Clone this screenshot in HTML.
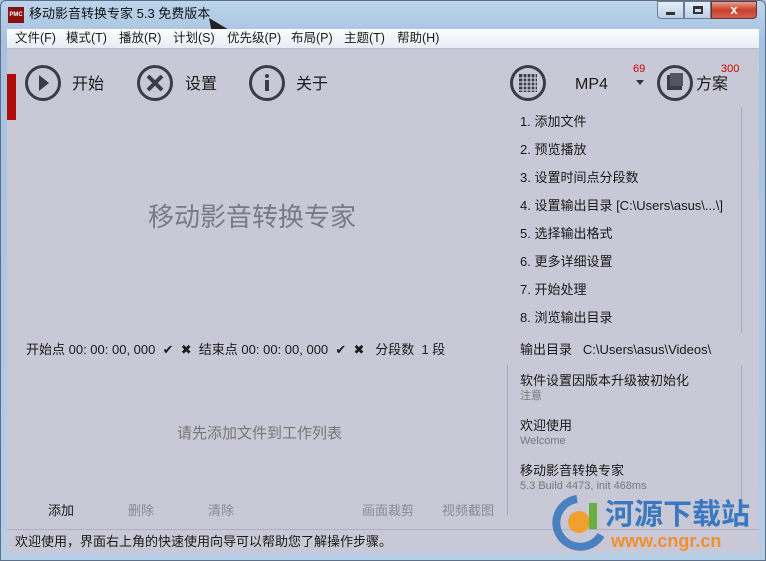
<!DOCTYPE html><html><head><meta charset="utf-8"><style>
*{margin:0;padding:0;box-sizing:border-box}
body{width:766px;height:561px;overflow:hidden;font-family:"Liberation Sans","Noto Sans CJK SC",sans-serif;background:#a9c3de;position:relative;font-size:13px;color:#1a1a1a;line-height:1.25}
.frame{position:absolute;left:0;top:0;width:766px;height:561px;background:linear-gradient(#bcd4ec,#a6c2df 40px,#b6cde6);border:1px solid #5d6f86;border-radius:6px 6px 0 0}
.abs{position:absolute;white-space:nowrap}
.menu{position:absolute;left:7px;top:29px;width:752px;height:20px;background:linear-gradient(#fdfdfe,#e8ecf3);border-bottom:1px solid #b8bfcc}
.menu span{position:absolute;top:2px;font-size:12.5px}
.content{position:absolute;left:7px;top:49px;width:752px;height:504px;background:#c9c8d6}
.circ{position:absolute;width:36px;height:36px;border:3px solid #3c3c48;border-radius:50%}
.big{position:absolute;font-size:16px}
.steps span{position:absolute;left:513px;font-size:13px}
.g{color:#777}
</style></head><body>
<div class="frame"></div>
<div class="abs" style="left:8px;top:7px;width:16px;height:16px;background:#8a1010;color:#fff;font-size:6px;font-weight:bold;line-height:16px;text-align:center">PMC</div>
<div class="abs" style="left:29px;top:6px;font-size:13px;color:#111">移动影音转换专家 5.3 免费版本</div>
<svg class="abs" style="left:207px;top:17px" width="26" height="22"><path d="M2 1 L24 14 L12 14 L6 21 Z" fill="#222"/></svg>
<div class="abs" style="left:657px;top:1px;width:27px;height:18px;border:1px solid #6b7d95;border-radius:0 0 0 4px;background:linear-gradient(#e6eef8,#bcd0e6)"><div style="position:absolute;left:8px;top:10px;width:9px;height:3px;background:#333"></div></div>
<div class="abs" style="left:684px;top:1px;width:27px;height:18px;border:1px solid #6b7d95;background:linear-gradient(#e6eef8,#bcd0e6)"><div style="position:absolute;left:8px;top:4px;width:10px;height:8px;border:2px solid #333;border-top-width:3px"></div></div>
<div class="abs" style="left:711px;top:1px;width:46px;height:18px;border:1px solid #6b3030;border-radius:0 0 4px 0;background:linear-gradient(#e8a090,#c8402a 50%,#d06050);color:#fff;font-weight:bold;text-align:center;font-size:13px;line-height:16px">x</div>
<div class="menu">
<span style="left:8px">文件(F)</span><span style="left:59px">模式(T)</span><span style="left:112px">播放(R)</span><span style="left:166px">计划(S)</span><span style="left:220px">优先级(P)</span><span style="left:284px">布局(P)</span><span style="left:337px">主题(T)</span><span style="left:390px">帮助(H)</span>
</div>
<div class="content">
<div class="abs" style="left:0;top:25px;width:9px;height:46px;background:#b00c0c"></div>
<div class="circ" style="left:18px;top:16px"><svg width="30" height="30"><path d="M11 7 L21 15 L11 23Z" fill="#3c3c48"/></svg></div>
<div class="big" style="left:65px;top:26px">开始</div>
<div class="circ" style="left:130px;top:16px"><svg width="30" height="30"><path d="M8 8 L22 22 M22 8 L8 22" stroke="#3c3c48" stroke-width="4"/></svg></div>
<div class="big" style="left:178px;top:26px">设置</div>
<div class="circ" style="left:242px;top:16px"><svg width="30" height="30"><circle cx="15" cy="8" r="2" fill="#3c3c48"/><rect x="13" y="12" width="4" height="11" fill="#3c3c48"/></svg></div>
<div class="big" style="left:289px;top:26px">关于</div>
<div class="circ" style="left:503px;top:16px"><svg width="30" height="30"><g fill="#3c3c48"><rect x="6" y="6" width="18" height="18"/></g><path d="M6 10h18M6 14h18M6 18h18M6 22h18M10 6v18M14 6v18M18 6v18M22 6v18" stroke="#c9c8d6" stroke-width="1.3"/></svg></div>
<div class="big" style="left:568px;top:26px">MP4</div>
<div class="abs" style="left:626px;top:14px;color:#c00;font-size:11px">69</div>
<svg class="abs" style="left:629px;top:31px" width="8" height="6"><path d="M0 0h8L4 5z" fill="#333"/></svg>
<div class="circ" style="left:650px;top:16px"><svg width="30" height="30"><rect x="7" y="7" width="15" height="15" fill="#3c3c48"/><rect x="10" y="5" width="13" height="13" fill="#555562"/></svg></div>
<div class="big" style="left:689px;top:26px">方案</div>
<div class="abs" style="left:714px;top:14px;color:#c00;font-size:11px">300</div>
<div class="abs" style="left:734px;top:58px;width:1px;height:226px;background:#a9a8b8"></div>
<div class="abs" style="left:734px;top:316px;width:1px;height:150px;background:#a9a8b8"></div>
<div class="abs" style="left:500px;top:316px;width:1px;height:150px;background:#a9a8b8"></div>
<div class="steps">
<span style="top:65px">1. 添加文件</span><span style="top:93px">2. 预览播放</span><span style="top:121px">3. 设置时间点分段数</span><span style="top:149px">4. 设置输出目录 [C:\Users\asus\...\]</span><span style="top:177px">5. 选择输出格式</span><span style="top:205px">6. 更多详细设置</span><span style="top:233px">7. 开始处理</span><span style="top:261px">8. 浏览输出目录</span>
<span style="top:293px">输出目录&nbsp;&nbsp;&nbsp;C:\Users\asus\Videos\</span>
<span style="top:324px">软件设置因版本升级被初始化</span><span class="g" style="top:341px;font-size:11px">注意</span>
<span style="top:369px">欢迎使用</span><span class="g" style="top:386px;font-size:11px">Welcome</span>
<span style="top:414px">移动影音转换专家</span><span class="g" style="top:431px;font-size:11px">5.3 Build 4473, init 468ms</span>
</div>
<div class="abs" style="left:141px;top:152px;font-size:26px;color:#7a7a86">移动影音转换专家</div>
<div class="abs" style="left:19px;top:293px">开始点 00: 00: 00, 000 &nbsp;✔ &nbsp;✖ &nbsp;结束点 00: 00: 00, 000 &nbsp;✔ &nbsp;✖ &nbsp;&nbsp;分段数 &nbsp;1 段</div>
<div class="abs" style="left:170px;top:376px;font-size:15px;color:#777">请先添加文件到工作列表</div>
<div class="abs" style="left:41px;top:454px">添加</div>
<div class="abs g" style="left:121px;top:454px;color:#8a8a96">删除</div>
<div class="abs g" style="left:201px;top:454px;color:#8a8a96">清除</div>
<div class="abs g" style="left:355px;top:454px;color:#8a8a96">画面裁剪</div>
<div class="abs g" style="left:435px;top:454px;color:#8a8a96">视频截图</div>
<div class="abs" style="left:0;top:480px;width:752px;height:1px;background:#b0afbf"></div>
<div class="abs" style="left:8px;top:485px">欢迎使用，界面右上角的快速使用向导可以帮助您了解操作步骤。</div>
<svg class="abs" style="left:540px;top:446px" width="60" height="56"><path d="M30 4 A24 24 0 1 0 54 40" stroke="#4a80c0" stroke-width="8" fill="none"/><circle cx="32" cy="27" r="11" fill="#f0a030"/><rect x="42" y="8" width="8" height="26" fill="#6ab040"/></svg>
<div class="abs" style="left:598px;top:448px;font-size:29px;font-weight:bold;color:#3a78c0">河源下载站</div>
<div class="abs" style="left:604px;top:481px;font-size:18px;font-weight:bold;color:#f09030">www.cngr.cn</div>
</div>
</body></html>
